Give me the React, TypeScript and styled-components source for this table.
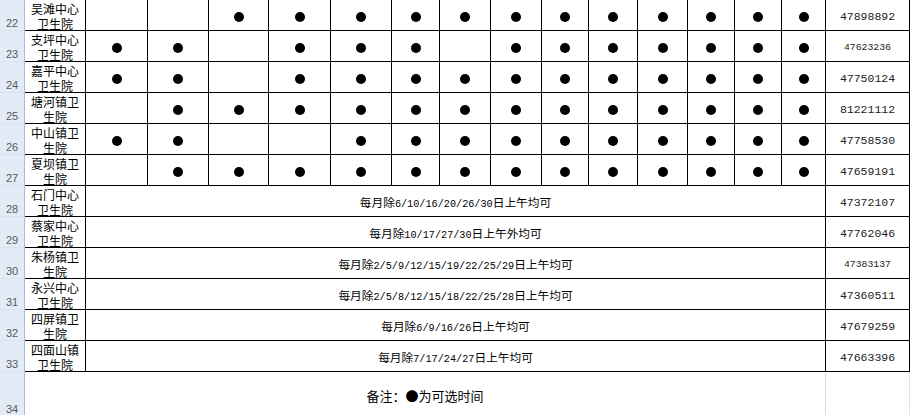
import React from "react";
import type { FC } from "react";
import styled, { createGlobalStyle } from "styled-components";

const GlobalStyle = createGlobalStyle`
  html, body {
    margin: 0;
    padding: 0;
    background: #ffffff;
    overflow: hidden;
  }
  body {
    font-family: "Noto Sans CJK SC", "Liberation Sans", sans-serif;
    color: #111;
  }
`;

// column widths: row header, name, 14 day columns, phone
const COLS = [25, 61, 62, 61, 60, 62, 61, 48, 51, 51, 47, 49, 50, 47, 47, 44, 84];

type DotRow = {
  no: number;
  name: string;
  dots: number[];
  phone: string;
  small?: boolean;
};

type TextRow = {
  no: number;
  name: string;
  text: string;
  phone: string;
  small?: boolean;
};

const dotRows: DotRow[] = [
  { no: 22, name: "吴滩中心卫生院", dots: [0, 0, 1, 1, 1, 1, 1, 1, 1, 1, 1, 1, 1, 1], phone: "47898892" },
  { no: 23, name: "支坪中心卫生院", dots: [1, 1, 0, 1, 1, 1, 0, 1, 1, 1, 1, 1, 1, 1], phone: "47623236", small: true },
  { no: 24, name: "嘉平中心卫生院", dots: [1, 1, 0, 1, 1, 1, 1, 1, 1, 1, 1, 1, 1, 1], phone: "47750124" },
  { no: 25, name: "塘河镇卫生院", dots: [0, 1, 1, 1, 1, 1, 1, 1, 1, 1, 1, 1, 1, 1], phone: "81221112" },
  { no: 26, name: "中山镇卫生院", dots: [1, 1, 0, 0, 1, 1, 1, 1, 1, 1, 1, 1, 1, 1], phone: "47758530" },
  { no: 27, name: "夏坝镇卫生院", dots: [0, 1, 1, 1, 1, 1, 1, 1, 1, 1, 1, 1, 1, 1], phone: "47659191" },
];

const textRows: TextRow[] = [
  { no: 28, name: "石门中心卫生院", text: "每月除6/10/16/20/26/30日上午均可", phone: "47372107" },
  { no: 29, name: "蔡家中心卫生院", text: "每月除10/17/27/30日上午外均可", phone: "47762046" },
  { no: 30, name: "朱杨镇卫生院", text: "每月除2/5/9/12/15/19/22/25/29日上午均可", phone: "47383137", small: true },
  { no: 31, name: "永兴中心卫生院", text: "每月除2/5/8/12/15/18/22/25/28日上午均可", phone: "47360511" },
  { no: 32, name: "四屏镇卫生院", text: "每月除6/9/16/26日上午均可", phone: "47679259" },
  { no: 33, name: "四面山镇卫生院", text: "每月除7/17/24/27日上午均可", phone: "47663396" },
];

const Sheet = styled.div`
  display: grid;
  grid-template-columns: ${COLS.map((w) => `${w}px`).join(" ")};
  grid-template-rows: repeat(12, 31px) 45px;
  width: ${COLS.reduce((a, b) => a + b, 0)}px;
`;

const RowHead = styled.div`
  display: flex;
  align-items: flex-end;
  justify-content: center;
  padding-bottom: 1px;
  box-sizing: border-box;
  background: #e3ebf6;
  border-right: 1px solid #a9bdd6;
  border-bottom: 1px solid #d8e1ee;
  font-family: "Liberation Sans", Arial, sans-serif;
  font-size: 11px;
  color: #555a60;
`;

const Cell = styled.div`
  display: flex;
  align-items: center;
  justify-content: center;
  box-sizing: border-box;
  border-right: 1px solid #000;
  border-bottom: 1px solid #000;
  min-width: 0;
`;

const NameCell = styled(Cell)`
  padding: 2px 5px 0;
  font-size: 12px;
  line-height: 15px;
  text-align: center;
  color: #000;
`;

const DayCell = styled(Cell)`
  padding-top: 3px;
`;

const Dot = styled.span`
  width: 10px;
  height: 10px;
  border-radius: 50%;
  background: #000;
`;

const MergedCell = styled(Cell)`
  grid-column: span 14;
  padding-top: 1px;
  font-size: 11.7px;
  white-space: nowrap;
  color: #000;
`;

const Ascii = styled.span`
  font-family: "Liberation Mono", "Courier New", monospace;
  font-size: 10.2px;
`;

const PhoneCell = styled(Cell)<{ $small?: boolean }>`
  padding-top: 2px;
  font-family: "Liberation Mono", "Courier New", monospace;
  font-size: ${(p) => (p.$small ? "9.8px" : "11.5px")};
  color: #222;
`;

const NoteCell = styled.div`
  grid-column: span 15;
  display: flex;
  align-items: center;
  justify-content: center;
  padding-top: 2px;
  box-sizing: border-box;
  border-right: 1px solid #d9d9d9;
  font-size: 13px;
  color: #000;
`;

const BlankCell = styled.div`
  border-right: 1px solid #e2e2e2;
`;

const Mixed: FC<{ text: string }> = ({ text }) => (
  <span>
    {text.split(/([\x21-\x7e]+)/).map((part, i) =>
      /^[\x21-\x7e]+$/.test(part) ? <Ascii key={i}>{part}</Ascii> : part
    )}
  </span>
);

const App: FC = () => {
  return (
    <>
      <GlobalStyle />
      <Sheet>
        {dotRows.map((row) => (
          <React.Fragment key={row.no}>
            <RowHead>{row.no}</RowHead>
            <NameCell>{row.name}</NameCell>
            {row.dots.map((d, i) => (
              <DayCell key={i}>{d ? <Dot /> : null}</DayCell>
            ))}
            <PhoneCell $small={row.small}>{row.phone}</PhoneCell>
          </React.Fragment>
        ))}
        {textRows.map((row) => (
          <React.Fragment key={row.no}>
            <RowHead>{row.no}</RowHead>
            <NameCell>{row.name}</NameCell>
            <MergedCell>
              <Mixed text={row.text} />
            </MergedCell>
            <PhoneCell $small={row.small}>{row.phone}</PhoneCell>
          </React.Fragment>
        ))}
        <RowHead>34</RowHead>
        <NoteCell>备注：●为可选时间</NoteCell>
        <BlankCell />
      </Sheet>
    </>
  );
};

export default App;
